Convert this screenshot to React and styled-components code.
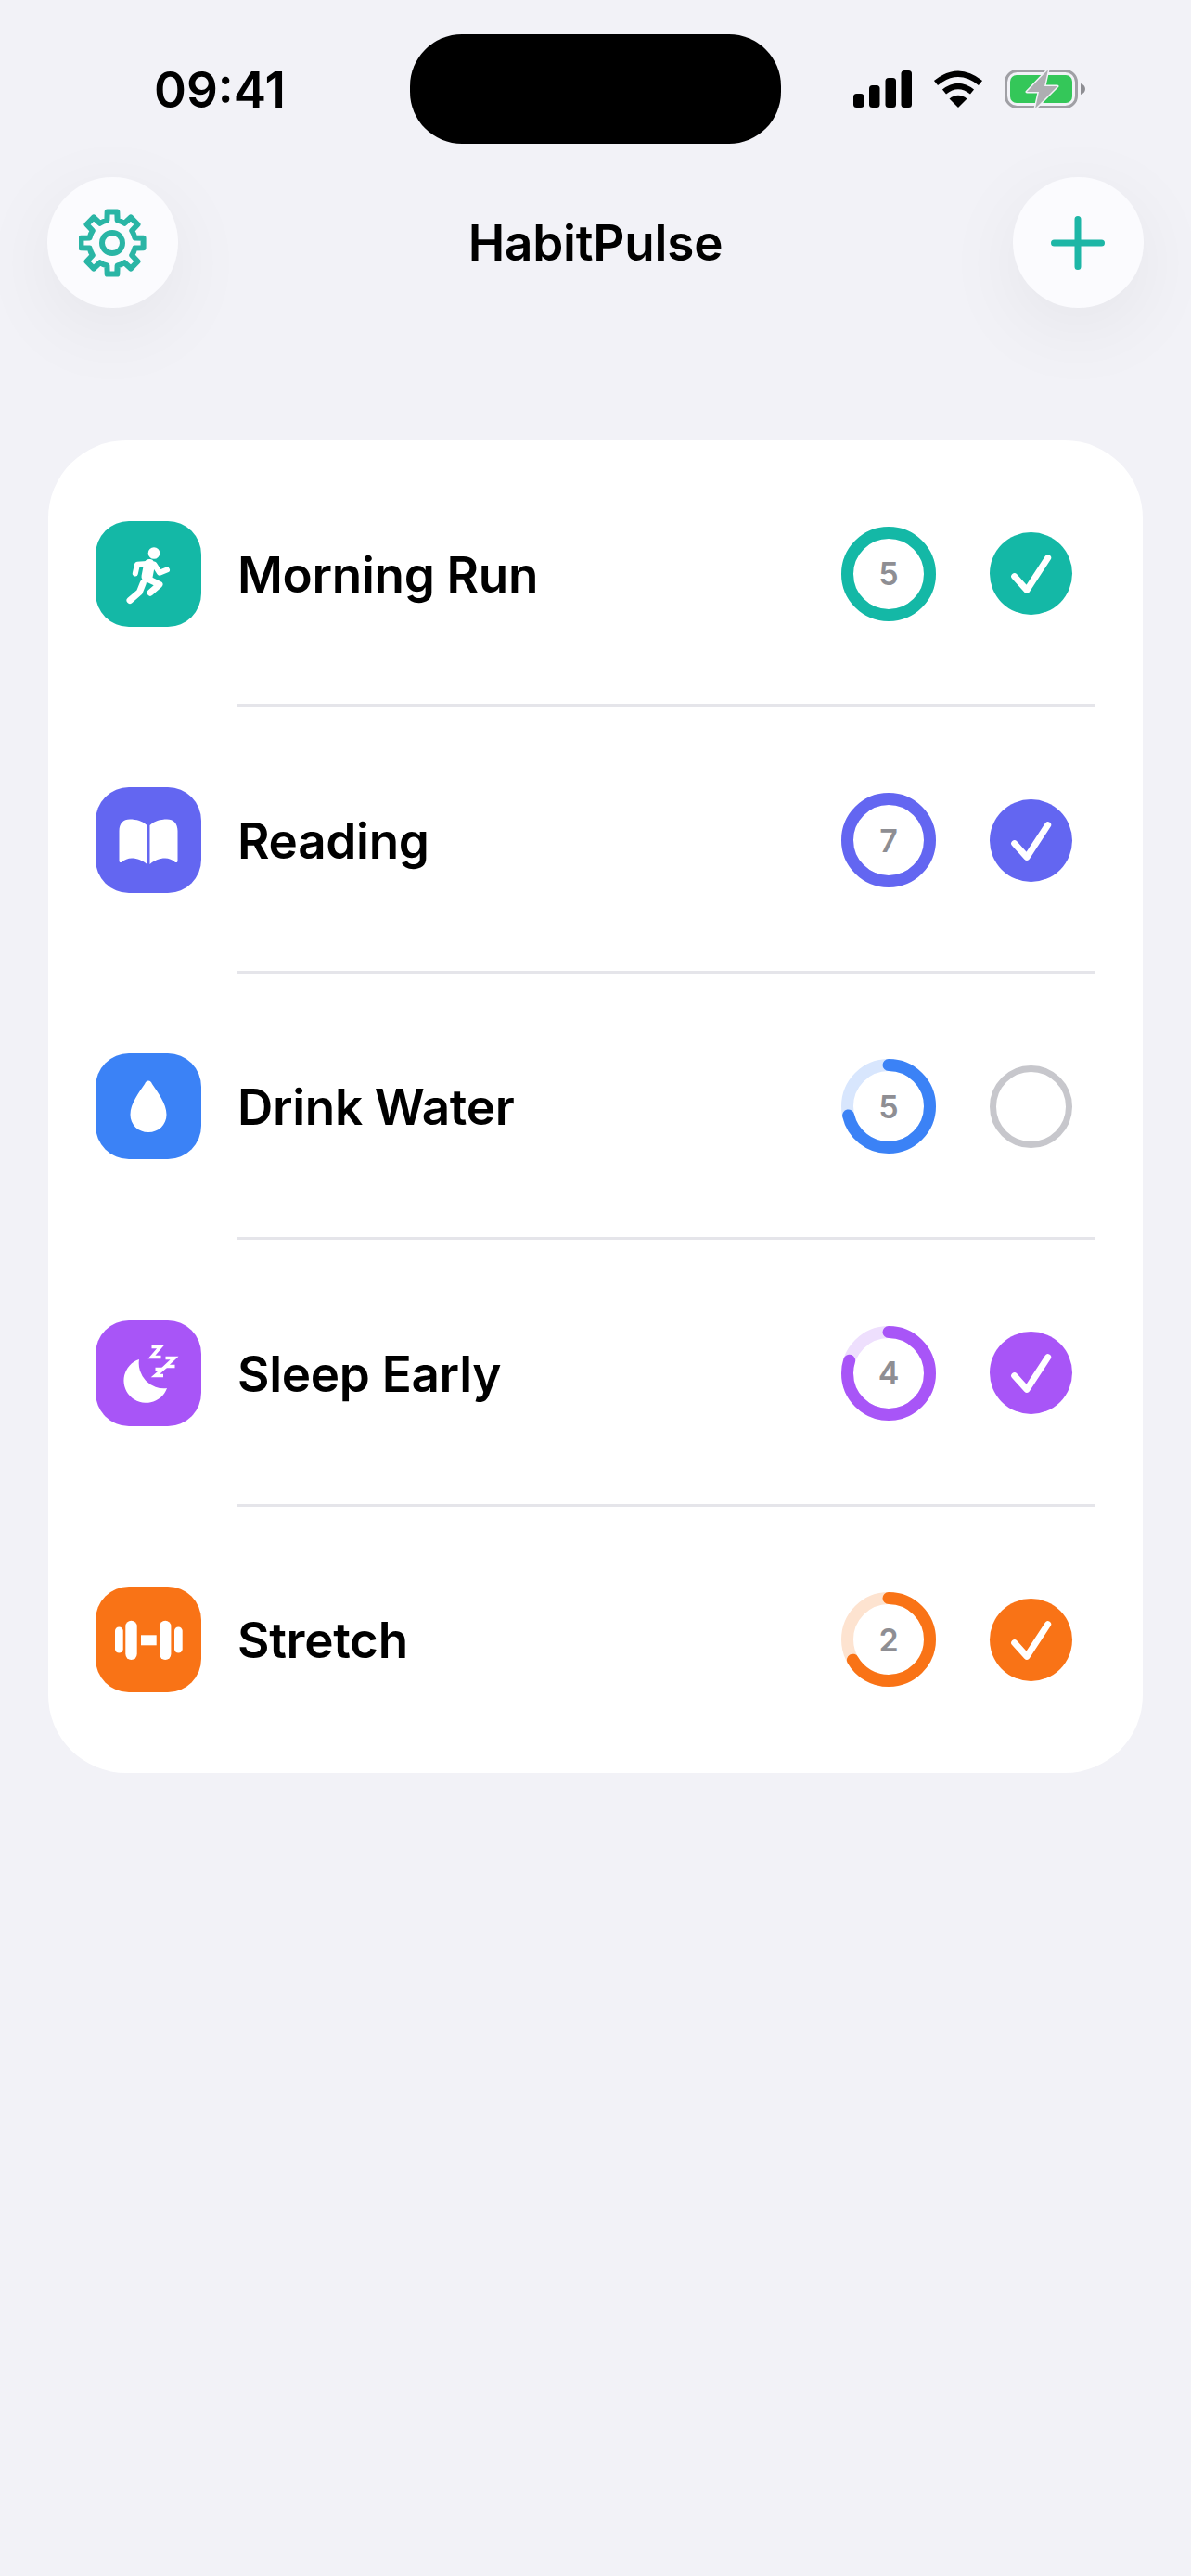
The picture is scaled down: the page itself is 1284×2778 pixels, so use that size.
// App.jsx

import React from "react";
import styled, { createGlobalStyle } from "styled-components";

const GlobalStyle = createGlobalStyle`
  html, body {
    margin: 0;
    padding: 0;
    background: #f2f2f7;
  }
  body {
    font-family: "Inter", "Liberation Sans", sans-serif;
  }
`;

const Page = styled.div`
  width: 1284px;
  height: 2778px;
  padding-top: 37px;
  box-sizing: border-box;
  overflow: hidden;
  background: #f2f2f7;
`;

const StatusBar = styled.div`
  display: grid;
  grid-template-columns: 442px 400px 1fr;
  align-items: center;
  height: 118px;
`;

const Time = styled.div`
  padding-left: 166px;
  padding-top: 1px;
  font-size: 53px;
  font-weight: 600;
  color: #000;
`;

const Island = styled.div`
  height: 118px;
  border-radius: 56px;
  background: #000;
`;

const StatusIcons = styled.div`
  display: flex;
  align-items: center;
  padding-left: 78px;
  gap: 23px;
`;

const Header = styled.header`
  display: flex;
  align-items: center;
  justify-content: space-between;
  padding: 0 51px;
  margin-top: 36px;
`;

const RoundButton = styled.button`
  width: 141px;
  height: 141px;
  padding: 0;
  border: none;
  border-radius: 50%;
  display: flex;
  align-items: center;
  justify-content: center;
  background: #fbfbfe;
  box-shadow: 0 22px 90px rgba(0, 0, 0, 0.06);
`;

const Title = styled.h1`
  margin: 0;
  font-size: 53px;
  font-weight: 600;
  letter-spacing: -0.2px;
  color: #000;
`;

const Card = styled.section`
  margin: 143px 52px 0 52px;
  border-radius: 84px;
  background: #fff;
`;

const Row = styled.div`
  display: flex;
  align-items: center;
  height: 287.4px;
  padding: 0 51px;
`;

const IconTile = styled.div`
  flex: none;
  width: 114px;
  height: 114px;
  border-radius: 36px;
  background: ${(p) => p.$color};
  display: flex;
`;

const RowBody = styled.div`
  flex: 1;
  align-self: stretch;
  display: flex;
  align-items: center;
  margin-left: 38px;
  padding-right: 25px;
  box-shadow: ${(p) => (p.$last ? "none" : "inset 0 -3px 0 #e5e5ea")};
`;

const Name = styled.div`
  flex: 1;
  padding-left: 1px;
  padding-top: 2px;
  font-size: 53px;
  font-weight: 560;
  letter-spacing: -0.3px;
  color: #000;
`;

const Ring = styled.div`
  display: grid;
  place-items: center;
  width: 102px;
  height: 102px;
  margin-right: 58px;
  & > * {
    grid-area: 1 / 1;
  }
`;

const RingSvg = styled.svg`
  display: block;
  transform: rotate(-90deg);
`;

const RingCount = styled.span`
  font-size: 34px;
  font-weight: 600;
  color: #8e8e93;
`;

const CheckCircle = styled.div`
  flex: none;
  box-sizing: border-box;
  width: 89px;
  height: 89px;
  border-radius: 50%;
  background: ${(p) => (p.$done ? p.$color : "transparent")};
  border: ${(p) => (p.$done ? "none" : "7px solid #c7c7cc")};
`;

// gear outline, 8 teeth
const gearPath = (() => {
  const cx = 36;
  const cy = 37;
  const tip = 34;
  const root = 25;
  const pt = (r, deg) => {
    const a = (deg * Math.PI) / 180;
    return `${(cx + r * Math.cos(a)).toFixed(2)} ${(cy + r * Math.sin(a)).toFixed(2)}`;
  };
  let d = "";
  for (let i = 0; i < 8; i++) {
    const c = i * 45 - 90;
    d += `${i === 0 ? "M" : "L"}${pt(root, c - 13)} L${pt(tip, c - 9)} L${pt(tip, c + 9)} L${pt(root, c + 13)} `;
    d += `A${root} ${root} 0 0 1 ${pt(root, c + 32)} `;
  }
  return d + "Z";
})();

const GearIcon = () => (
  <svg width="74" height="74" viewBox="0 0 74 74" fill="none" stroke="#2ab5a5" strokeWidth="6" strokeLinejoin="round">
    <path d={gearPath} />
    <circle cx="36" cy="37" r="11" />
  </svg>
);

const PlusIcon = () => (
  <svg width="58" height="58" viewBox="0 0 58 58" fill="none" stroke="#1db6a6" strokeWidth="7" strokeLinecap="round">
    <path d="M29 3.5V54.5M3.5 29H54.5" />
  </svg>
);

const SignalIcon = () => (
  <svg width="63" height="40" viewBox="0 0 63 40" fill="#000">
    <rect x="0" y="25" width="11.5" height="15" rx="3.5" />
    <rect x="17" y="16" width="11.5" height="24" rx="3.5" />
    <rect x="34.5" y="8" width="11.5" height="32" rx="3.5" />
    <rect x="51.5" y="0" width="11.5" height="40" rx="3.5" />
  </svg>
);

const WifiIcon = () => (
  <svg width="54" height="40" viewBox="0 0 54 40">
    <path d="M3 13.5Q27 -6 51 13.5" fill="none" stroke="#000" strokeWidth="6.5" />
    <path d="M12 23Q27 11 42 23" fill="none" stroke="#000" strokeWidth="6.5" />
    <path d="M27 40L17.5 30.5Q27 23 36.5 30.5Z" fill="#000" />
  </svg>
);

const BatteryIcon = () => (
  <svg width="88" height="44" viewBox="0 0 88 44">
    <rect x="1.5" y="2.5" width="76" height="39" rx="12" fill="none" stroke="#a0a0a5" strokeWidth="3" />
    <rect x="6" y="7" width="67" height="30" rx="7" fill="#34c759" />
    <path d="M82 16C85 17 87 19 87 22C87 25 85 27 82 28Z" fill="#8e8e93" />
    <path
      d="M47 1L24 25H37L33 43L57 19H43Z"
      fill="#aeaeb2"
      stroke="#f2f2f7"
      strokeWidth="3"
      strokeLinejoin="round"
      paintOrder="stroke"
    />
  </svg>
);

const TileSvg = ({ children }) => (
  <svg width="114" height="114" viewBox="0 0 114 114" fill="#fff">
    {children}
  </svg>
);

const RunIcon = () => (
  <TileSvg>
    <circle cx="63" cy="34.5" r="6.3" />
    <g fill="none" stroke="#fff" strokeLinecap="round" strokeLinejoin="round">
      <path d="M55.7 46L45 46.7L42.8 56.5" strokeWidth="6" />
      <path d="M63.3 46.7L69 55.7L77 52.5" strokeWidth="6" />
      <path d="M58 47L55.5 60" strokeWidth="12" />
      <path d="M55.7 62L69 68.3L59 77.2" strokeWidth="7" />
      <path d="M51.3 66.7L47.3 76.7L37 85.5" strokeWidth="7" />
    </g>
  </TileSvg>
);

const BookIcon = () => (
  <TileSvg>
    <path d="M25.5 47C25.5 39 30 34.5 37 34.5C44 34.5 51 36.5 55.5 41V83C51 79 45 76.5 39 76.5C35 76.5 31 78 28 81H27C26 81 25.5 80.5 25.5 79Z" />
    <path d="M88.5 47C88.5 39 84 34.5 77 34.5C70 34.5 63 36.5 58.5 41V83C63 79 69 76.5 75 76.5C79 76.5 83 78 86 81H87C88 81 88.5 80.5 88.5 79Z" />
  </TileSvg>
);

const DropIcon = () => (
  <TileSvg>
    <path d="M57 29.5C59 29.5 60 31 61 33C67 42 76.5 54 76.5 66C76.5 77 68 85 57 85C46 85 37.5 77 37.5 66C37.5 54 47 42 53 33C54 31 55 29.5 57 29.5Z" />
  </TileSvg>
);

const MoonIcon = () => (
  <TileSvg>
    <path d="M47 42A24 24 0 1 0 77 73A27 27 0 0 1 47 42Z" />
    <g fill="none" stroke="#fff" strokeWidth="3.6" strokeLinejoin="miter">
      <path d="M60.5 28.5H70L60.5 39.5H70.5" />
      <path d="M75.5 40.5H85L75.5 49.5H85.5" />
      <path d="M64.5 52.5H72.5L64.5 59.5H73" />
    </g>
  </TileSvg>
);

const DumbbellIcon = () => (
  <TileSvg>
    <rect x="21" y="43.5" width="8.7" height="28" rx="4.3" />
    <rect x="32.3" y="36.7" width="12.4" height="42.3" rx="6.2" />
    <rect x="49" y="52.3" width="16.7" height="11" />
    <rect x="69" y="36.7" width="12.4" height="42.3" rx="6.2" />
    <rect x="85" y="43.5" width="8.7" height="28" rx="4.3" />
  </TileSvg>
);

const ProgressRing = ({ color, track, progress, count }) => (
  <Ring>
    <RingSvg width="102" height="102" viewBox="0 0 102 102" fill="none" strokeWidth="13">
      <circle cx="51" cy="51" r="44.5" stroke={track} />
      <circle
        cx="51"
        cy="51"
        r="44.5"
        stroke={color}
        strokeLinecap="round"
        pathLength="100"
        strokeDasharray={`${progress} 100`}
      />
    </RingSvg>
    <RingCount>{count}</RingCount>
  </Ring>
);

const Check = ({ color, done }) => (
  <CheckCircle $color={color} $done={done}>
    {done && (
      <svg width="89" height="89" viewBox="0 0 89 89" fill="none" stroke="#fff" strokeWidth="7" strokeLinecap="round" strokeLinejoin="round">
        <path d="M26.7 47.7L40 62.3L62.7 27.7" />
      </svg>
    )}
  </CheckCircle>
);

const habits = [
  { name: "Morning Run", color: "#14b8a6", track: "#d0f1ed", icon: <RunIcon />, count: 5, progress: 100, done: true },
  { name: "Reading", color: "#6366f1", track: "#e0e0fc", icon: <BookIcon />, count: 7, progress: 100, done: true },
  { name: "Drink Water", color: "#3b82f6", track: "#d8e6fd", icon: <DropIcon />, count: 5, progress: 71.4, done: false },
  { name: "Sleep Early", color: "#a855f7", track: "#eedffd", icon: <MoonIcon />, count: 4, progress: 80, done: true },
  { name: "Stretch", color: "#f97316", track: "#fde3d0", icon: <DumbbellIcon />, count: 2, progress: 66.7, done: true },
];

const App = () => {
  return (
    <Page>
      <GlobalStyle />
      <StatusBar>
        <Time>09:41</Time>
        <Island />
        <StatusIcons>
          <SignalIcon />
          <WifiIcon />
          <BatteryIcon />
        </StatusIcons>
      </StatusBar>
      <Header>
        <RoundButton aria-label="Settings">
          <GearIcon />
        </RoundButton>
        <Title>HabitPulse</Title>
        <RoundButton aria-label="Add">
          <PlusIcon />
        </RoundButton>
      </Header>
      <Card>
        {habits.map((h, i) => (
          <Row key={h.name}>
            <IconTile $color={h.color}>{h.icon}</IconTile>
            <RowBody $last={i === habits.length - 1}>
              <Name>{h.name}</Name>
              <ProgressRing color={h.color} track={h.track} progress={h.progress} count={h.count} />
              <Check color={h.color} done={h.done} />
            </RowBody>
          </Row>
        ))}
      </Card>
    </Page>
  );
};

export default App;
